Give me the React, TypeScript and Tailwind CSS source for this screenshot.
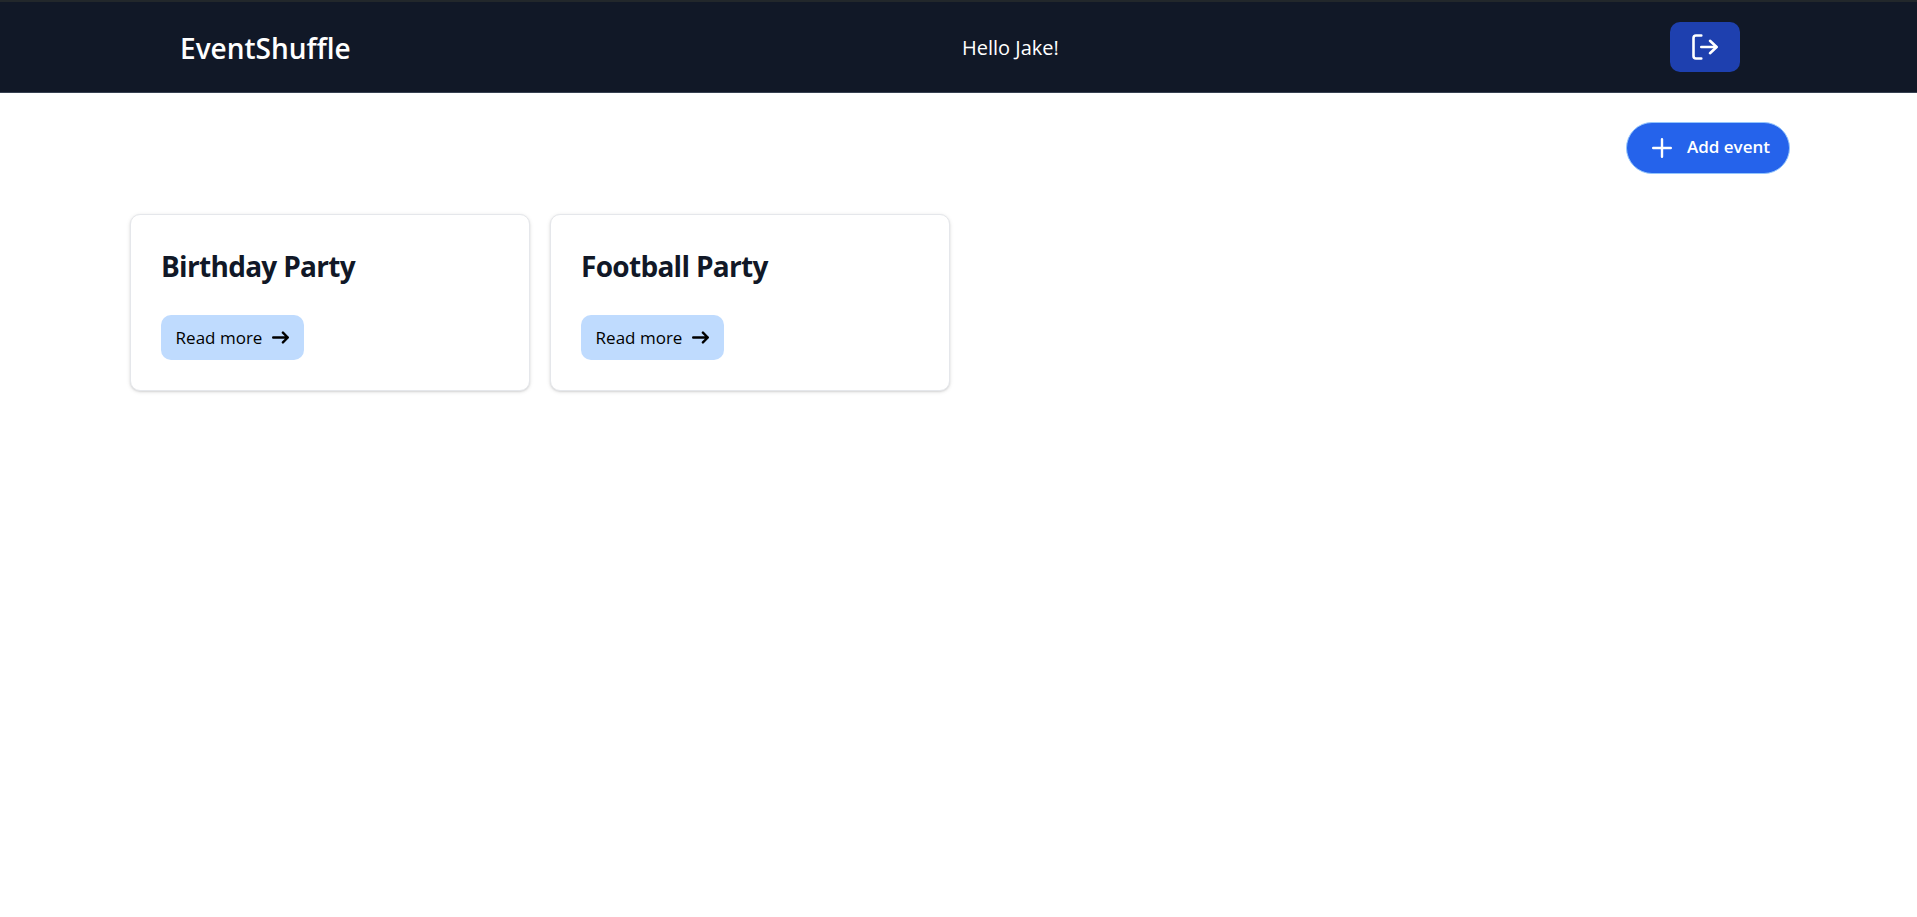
const events = ["Birthday Party", "Football Party"];

function LogoutIcon() {
  return (
    <svg className="h-[30px] w-[30px]" viewBox="0 0 30 30" fill="none" stroke="currentColor" strokeWidth="2.6" strokeLinecap="round" strokeLinejoin="round" aria-hidden="true">
      <path d="M11.3 3.5H6a2.5 2.5 0 0 0-2.5 2.5v18a2.5 2.5 0 0 0 2.5 2.5h5.3" />
      <path d="M11.3 15h15" />
      <path d="M20 8.8l6.6 6.2l-6.6 6.2" />
    </svg>
  );
}

function PlusIcon() {
  return (
    <svg className="h-5 w-5" viewBox="0 0 20 20" fill="none" stroke="currentColor" strokeWidth="2.4" strokeLinecap="round" aria-hidden="true">
      <path d="M10 1.2v17.6M1.2 10h17.6" />
    </svg>
  );
}

function ArrowIcon() {
  return (
    <svg className="h-[17px] w-[17px]" viewBox="0 0 14 10" fill="none" stroke="currentColor" strokeWidth="2" strokeLinecap="round" strokeLinejoin="round" aria-hidden="true">
      <path d="M1 5h12m0 0L9 1m4 4L9 9" />
    </svg>
  );
}

function EventCard({ title }: { title: string }) {
  return (
    <article className="w-[400px] rounded-[10px] border border-[#e5e7eb] bg-white p-[30px] shadow-[0_1px_4px_rgba(0,0,0,0.1),0_1px_2px_rgba(0,0,0,0.1)]">
      <h2 className="mb-7 text-[28px] leading-[42px] font-bold tracking-tight text-[#111827]">{title}</h2>
      <a href="#" className="inline-flex h-[45px] w-[143px] items-center justify-center gap-2.5 rounded-[10px] bg-[#bfdbfe] align-top text-[17px] text-black">
        Read more
        <ArrowIcon />
      </a>
    </article>
  );
}

export default function App() {
  return (
    <div className="min-h-screen bg-white font-['Open_Sans','Noto_Sans',sans-serif]">
      <header className="flex h-[93px] items-center justify-between border-t-2 border-b border-t-[#22272b] border-b-[#374151] bg-[#111827] pr-[177px] pl-[180px] text-white">
        <a href="#" className="pt-0.5 text-[28px] leading-9 font-semibold">EventShuffle</a>
        <p className="pt-0.5 text-[20px] leading-7">Hello Jake!</p>
        <button type="button" aria-label="Log out" className="flex h-[50px] w-[70px] items-center justify-center rounded-[10px] bg-[#1e40af]">
          <LogoutIcon />
        </button>
      </header>
      <main className="pr-[127px] pb-10 pl-[130px]">
        <div className="flex justify-end pt-[29px]">
          <button type="button" className="flex h-[52px] w-[164px] items-center justify-center gap-[15px] rounded-full border border-[#93c5fd] bg-[#2563eb] pl-1.5 text-[17px] font-semibold text-white">
            <PlusIcon />
            <span className="pb-0.5">Add event</span>
          </button>
        </div>
        <section aria-label="Events" className="mt-10 flex flex-wrap gap-5">
          {events.map((title) => (
            <EventCard key={title} title={title} />
          ))}
        </section>
      </main>
    </div>
  );
}
